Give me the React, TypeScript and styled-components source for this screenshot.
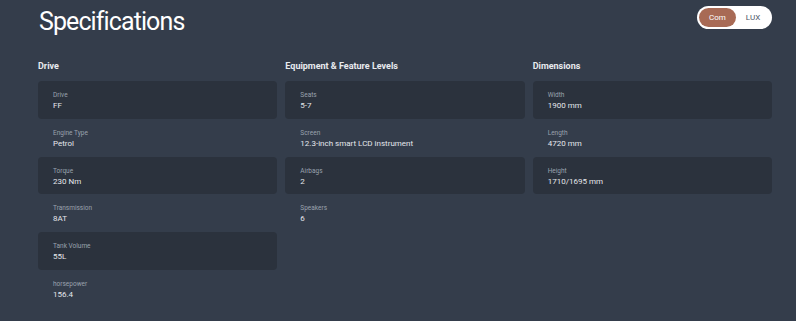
import React, { useState } from 'react';
import styled, { createGlobalStyle } from 'styled-components';

const GlobalStyle = createGlobalStyle`
  html, body {
    margin: 0;
    padding: 0;
    background: #343d4b;
  }
  body {
    font-family: Roboto, "Noto Sans", sans-serif;
  }
`;

const Page = styled.div`
  width: 796px;
  height: 321px;
  box-sizing: border-box;
  padding: 0 24px 0 38px;
  background: #343d4b;
  color: #ffffff;
  overflow: hidden;
`;

const Header = styled.header`
  display: flex;
  justify-content: space-between;
  align-items: flex-start;
  height: 59px;
`;

const Title = styled.h1`
  margin: 7px 0 0 1px;
  font-size: 25px;
  font-weight: 400;
  line-height: 30px;
  letter-spacing: -0.9px;
  color: #ffffff;
`;

const Toggle = styled.div`
  display: flex;
  align-items: center;
  margin-top: 6px;
  width: 75px;
  height: 23px;
  box-sizing: border-box;
  padding: 2px;
  border-radius: 12px;
  background: #ffffff;
`;

const ToggleOption = styled.button<{ $active: boolean }>`
  flex: ${(p) => (p.$active ? '0 0 37px' : '1')};
  height: 19px;
  border: none;
  border-radius: 10px;
  padding: 0;
  font-family: Roboto, sans-serif;
  font-size: 8px;
  cursor: pointer;
  background: ${(p) => (p.$active ? '#a86a55' : 'transparent')};
  color: ${(p) => (p.$active ? '#ffffff' : '#4d5566')};
`;

const Columns = styled.div`
  display: grid;
  grid-template-columns: repeat(3, 1fr);
  column-gap: 8px;
`;

const Column = styled.section``;

const Heading = styled.h2`
  margin: 0 0 7px 0;
  font-size: 9px;
  font-weight: 700;
  line-height: 15px;
  color: #e8ebef;
`;

const Row = styled.div<{ $shaded: boolean }>`
  height: 37.8px;
  box-sizing: border-box;
  padding: 10px 15px 0;
  border-radius: 4px;
  background: ${(p) => (p.$shaded ? '#2b323d' : 'transparent')};
`;

const Label = styled.div`
  font-size: 6.5px;
  line-height: 9px;
  color: #9aa2ae;
`;

const Value = styled.div`
  font-size: 8px;
  font-weight: 400;
  line-height: 12px;
  color: #e4e7eb;
`;

type Spec = { label: string; value: string };

const groups: { title: string; items: Spec[] }[] = [
  {
    title: 'Drive',
    items: [
      { label: 'Drive', value: 'FF' },
      { label: 'Engine Type', value: 'Petrol' },
      { label: 'Torque', value: '230 Nm' },
      { label: 'Transmission', value: '8AT' },
      { label: 'Tank Volume', value: '55L' },
      { label: 'horsepower', value: '156.4' },
    ],
  },
  {
    title: 'Equipment & Feature Levels',
    items: [
      { label: 'Seats', value: '5-7' },
      { label: 'Screen', value: '12.3-inch smart LCD instrument' },
      { label: 'Airbags', value: '2' },
      { label: 'Speakers', value: '6' },
    ],
  },
  {
    title: 'Dimensions',
    items: [
      { label: 'Width', value: '1900 mm' },
      { label: 'Length', value: '4720 mm' },
      { label: 'Height', value: '1710/1695 mm' },
    ],
  },
];

const App = () => {
  const [level, setLevel] = useState('Com');

  return (
    <>
      <GlobalStyle />
      <Page>
        <Header>
          <Title>Specifications</Title>
          <Toggle>
            {['Com', 'LUX'].map((opt) => (
              <ToggleOption key={opt} $active={level === opt} onClick={() => setLevel(opt)}>
                {opt}
              </ToggleOption>
            ))}
          </Toggle>
        </Header>
        <Columns>
          {groups.map((g) => (
            <Column key={g.title}>
              <Heading>{g.title}</Heading>
              {g.items.map((item, i) => (
                <Row key={item.label} $shaded={i % 2 === 0}>
                  <Label>{item.label}</Label>
                  <Value>{item.value}</Value>
                </Row>
              ))}
            </Column>
          ))}
        </Columns>
      </Page>
    </>
  );
};

export default App;
